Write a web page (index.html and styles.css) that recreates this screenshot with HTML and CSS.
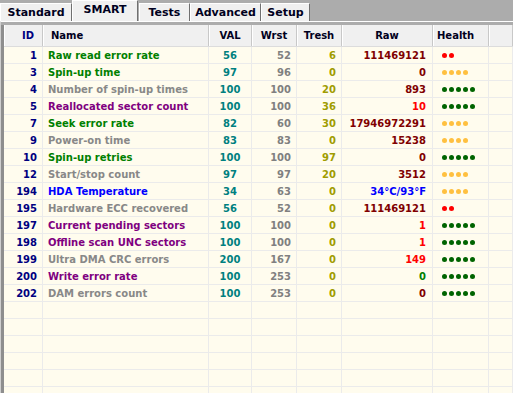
FILE: index.html
```html
<!DOCTYPE html>
<html lang="en">
<head>
    <meta charset="UTF-8">
    <title>SMART</title>
    <link rel="stylesheet" href="styles.css">
</head>
<body>

    <!-- Tab strip -->
    <div class="tabs">
        <div class="tab tab-standard">Standard</div>
        <div class="tab tab-smart active">SMART</div>
        <div class="tab tab-tests">Tests</div>
        <div class="tab tab-advanced">Advanced</div>
        <div class="tab tab-setup">Setup</div>
    </div>

    <div class="panel">
        <div class="grid">
            <div class="row head">
                <div class="cell c-id">ID</div>
                <div class="cell c-name">Name</div>
                <div class="cell c-mid">VAL</div>
                <div class="cell c-mid">Wrst</div>
                <div class="cell c-mid">Tresh</div>
                <div class="cell c-mid">Raw</div>
                <div class="cell c-health">Health</div>
                <div class="cell"></div>
            </div>

            <div class="row">
                <div class="cell c-id">1</div>
                <div class="cell c-name green">Raw read error rate</div>
                <div class="cell c-val">56</div>
                <div class="cell c-wrst">52</div>
                <div class="cell c-tresh">6</div>
                <div class="cell c-raw">111469121</div>
                <div class="cell c-health"><span class="dot red"></span><span class="dot red"></span></div>
                <div class="cell"></div>
            </div>
            <div class="row">
                <div class="cell c-id">3</div>
                <div class="cell c-name green">Spin-up time</div>
                <div class="cell c-val">97</div>
                <div class="cell c-wrst">96</div>
                <div class="cell c-tresh">0</div>
                <div class="cell c-raw">0</div>
                <div class="cell c-health"><span class="dot yellow"></span><span class="dot yellow"></span><span class="dot yellow"></span><span class="dot yellow"></span></div>
                <div class="cell"></div>
            </div>
            <div class="row">
                <div class="cell c-id">4</div>
                <div class="cell c-name gray">Number of spin-up times</div>
                <div class="cell c-val">100</div>
                <div class="cell c-wrst">100</div>
                <div class="cell c-tresh">20</div>
                <div class="cell c-raw">893</div>
                <div class="cell c-health"><span class="dot green"></span><span class="dot green"></span><span class="dot green"></span><span class="dot green"></span><span class="dot green"></span></div>
                <div class="cell"></div>
            </div>
            <div class="row">
                <div class="cell c-id">5</div>
                <div class="cell c-name purple">Reallocated sector count</div>
                <div class="cell c-val">100</div>
                <div class="cell c-wrst">100</div>
                <div class="cell c-tresh">36</div>
                <div class="cell c-raw red-text">10</div>
                <div class="cell c-health"><span class="dot green"></span><span class="dot green"></span><span class="dot green"></span><span class="dot green"></span><span class="dot green"></span></div>
                <div class="cell"></div>
            </div>
            <div class="row">
                <div class="cell c-id">7</div>
                <div class="cell c-name green">Seek error rate</div>
                <div class="cell c-val">82</div>
                <div class="cell c-wrst">60</div>
                <div class="cell c-tresh">30</div>
                <div class="cell c-raw">17946972291</div>
                <div class="cell c-health"><span class="dot yellow"></span><span class="dot yellow"></span><span class="dot yellow"></span><span class="dot yellow"></span></div>
                <div class="cell"></div>
            </div>
            <div class="row">
                <div class="cell c-id">9</div>
                <div class="cell c-name gray">Power-on time</div>
                <div class="cell c-val">83</div>
                <div class="cell c-wrst">83</div>
                <div class="cell c-tresh">0</div>
                <div class="cell c-raw">15238</div>
                <div class="cell c-health"><span class="dot yellow"></span><span class="dot yellow"></span><span class="dot yellow"></span><span class="dot yellow"></span></div>
                <div class="cell"></div>
            </div>
            <div class="row">
                <div class="cell c-id">10</div>
                <div class="cell c-name green">Spin-up retries</div>
                <div class="cell c-val">100</div>
                <div class="cell c-wrst">100</div>
                <div class="cell c-tresh">97</div>
                <div class="cell c-raw">0</div>
                <div class="cell c-health"><span class="dot green"></span><span class="dot green"></span><span class="dot green"></span><span class="dot green"></span><span class="dot green"></span></div>
                <div class="cell"></div>
            </div>
            <div class="row">
                <div class="cell c-id">12</div>
                <div class="cell c-name gray">Start/stop count</div>
                <div class="cell c-val">97</div>
                <div class="cell c-wrst">97</div>
                <div class="cell c-tresh">20</div>
                <div class="cell c-raw">3512</div>
                <div class="cell c-health"><span class="dot yellow"></span><span class="dot yellow"></span><span class="dot yellow"></span><span class="dot yellow"></span></div>
                <div class="cell"></div>
            </div>
            <div class="row">
                <div class="cell c-id">194</div>
                <div class="cell c-name blue">HDA Temperature</div>
                <div class="cell c-val">34</div>
                <div class="cell c-wrst">63</div>
                <div class="cell c-tresh">0</div>
                <div class="cell c-raw blue">34°C/93°F</div>
                <div class="cell c-health"><span class="dot yellow"></span><span class="dot yellow"></span><span class="dot yellow"></span><span class="dot yellow"></span></div>
                <div class="cell"></div>
            </div>
            <div class="row">
                <div class="cell c-id">195</div>
                <div class="cell c-name gray">Hardware ECC recovered</div>
                <div class="cell c-val">56</div>
                <div class="cell c-wrst">52</div>
                <div class="cell c-tresh">0</div>
                <div class="cell c-raw">111469121</div>
                <div class="cell c-health"><span class="dot red"></span><span class="dot red"></span></div>
                <div class="cell"></div>
            </div>
            <div class="row">
                <div class="cell c-id">197</div>
                <div class="cell c-name purple">Current pending sectors</div>
                <div class="cell c-val">100</div>
                <div class="cell c-wrst">100</div>
                <div class="cell c-tresh">0</div>
                <div class="cell c-raw red-text">1</div>
                <div class="cell c-health"><span class="dot green"></span><span class="dot green"></span><span class="dot green"></span><span class="dot green"></span><span class="dot green"></span></div>
                <div class="cell"></div>
            </div>
            <div class="row">
                <div class="cell c-id">198</div>
                <div class="cell c-name purple">Offline scan UNC sectors</div>
                <div class="cell c-val">100</div>
                <div class="cell c-wrst">100</div>
                <div class="cell c-tresh">0</div>
                <div class="cell c-raw red-text">1</div>
                <div class="cell c-health"><span class="dot green"></span><span class="dot green"></span><span class="dot green"></span><span class="dot green"></span><span class="dot green"></span></div>
                <div class="cell"></div>
            </div>
            <div class="row">
                <div class="cell c-id">199</div>
                <div class="cell c-name gray">Ultra DMA CRC errors</div>
                <div class="cell c-val">200</div>
                <div class="cell c-wrst">167</div>
                <div class="cell c-tresh">0</div>
                <div class="cell c-raw red-text">149</div>
                <div class="cell c-health"><span class="dot green"></span><span class="dot green"></span><span class="dot green"></span><span class="dot green"></span><span class="dot green"></span></div>
                <div class="cell"></div>
            </div>
            <div class="row">
                <div class="cell c-id">200</div>
                <div class="cell c-name purple">Write error rate</div>
                <div class="cell c-val">100</div>
                <div class="cell c-wrst">253</div>
                <div class="cell c-tresh">0</div>
                <div class="cell c-raw green">0</div>
                <div class="cell c-health"><span class="dot green"></span><span class="dot green"></span><span class="dot green"></span><span class="dot green"></span><span class="dot green"></span></div>
                <div class="cell"></div>
            </div>
            <div class="row">
                <div class="cell c-id">202</div>
                <div class="cell c-name gray">DAM errors count</div>
                <div class="cell c-val">100</div>
                <div class="cell c-wrst">253</div>
                <div class="cell c-tresh">0</div>
                <div class="cell c-raw">0</div>
                <div class="cell c-health"><span class="dot green"></span><span class="dot green"></span><span class="dot green"></span><span class="dot green"></span><span class="dot green"></span></div>
                <div class="cell"></div>
            </div>

            <!-- empty filler rows -->
            <div class="row"><div class="cell"></div><div class="cell"></div><div class="cell"></div><div class="cell"></div><div class="cell"></div><div class="cell"></div><div class="cell"></div><div class="cell"></div></div>
            <div class="row"><div class="cell"></div><div class="cell"></div><div class="cell"></div><div class="cell"></div><div class="cell"></div><div class="cell"></div><div class="cell"></div><div class="cell"></div></div>
            <div class="row"><div class="cell"></div><div class="cell"></div><div class="cell"></div><div class="cell"></div><div class="cell"></div><div class="cell"></div><div class="cell"></div><div class="cell"></div></div>
            <div class="row"><div class="cell"></div><div class="cell"></div><div class="cell"></div><div class="cell"></div><div class="cell"></div><div class="cell"></div><div class="cell"></div><div class="cell"></div></div>
            <div class="row"><div class="cell"></div><div class="cell"></div><div class="cell"></div><div class="cell"></div><div class="cell"></div><div class="cell"></div><div class="cell"></div><div class="cell"></div></div>
            <div class="row"><div class="cell"></div><div class="cell"></div><div class="cell"></div><div class="cell"></div><div class="cell"></div><div class="cell"></div><div class="cell"></div><div class="cell"></div></div>
        </div>
    </div>

</body>
</html>
```

FILE: styles.css
```css
body {
    margin: 0;
    background-color: #acacac;
    font-family: "DejaVu Sans", Verdana, sans-serif;
    font-weight: bold;
    overflow: hidden;
    height: 393px;
}

/* Tab strip */
.tabs {
    display: flex;
    align-items: flex-end;
    height: 21px;
    color: #000020;
    font-size: 11px;
}

.tab {
    box-sizing: border-box;
    height: 18px;
    line-height: 17px;
    text-align: center;
    background-color: #f0f0f0;
    border-top: 1px solid #ffffff;
    border-left: 1px solid #ffffff;
    border-right: 1px solid #707070;
}

.tab.active {
    height: 21px;
    line-height: 17px;
    align-self: flex-start;
}

.tab-standard { width: 72px; }
.tab-smart    { width: 66px; margin-right: 1px; }
.tab-tests    { width: 51px; }
.tab-advanced { width: 71px; }
.tab-setup    { width: 49px; }

/* Panel under tabs */
.panel {
    border-top: 1px solid #ffffff;
    border-left: 1px solid #cfcfcf;
    padding-top: 3px;
}

.grid {
    border-left: 3px solid #8e8e8e;
    background-color: #fffcee;
}

.row {
    display: grid;
    grid-template-columns: 39px 166px 43px 45px 45px 91px 56px 1fr;
    height: 17px;
    box-sizing: border-box;
    border-bottom: 1px solid #ebebeb;
    font-size: 10px;
    line-height: 18px;
}

.cell {
    border-right: 1px solid #ebebeb;
    white-space: nowrap;
    overflow: hidden;
}

/* Header */
.row.head {
    height: 22px;
    line-height: 22px;
    background-color: #f0f0f0;
    border-bottom: 1px solid #dcdcdc;
    color: #000020;
}

.head .cell {
    border-right: 1px solid #c8c8c8;
    box-shadow: inset 1px 0 #ffffff;
}

.head .c-id { text-align: right; padding-right: 8px; }
.head .c-name { padding-left: 8px; }
.head .c-mid { text-align: center; }
.head .c-health { padding-left: 4px; }

/* Data columns */
.c-id {
    text-align: right;
    padding-right: 5px;
    color: #000080;
}

.c-name { padding-left: 5px; }

.c-val {
    text-align: center;
    color: #008080;
}

.c-wrst {
    text-align: right;
    padding-right: 5px;
    color: #808080;
}

.c-tresh {
    text-align: right;
    padding-right: 5px;
    color: #a09c00;
}

.c-raw {
    text-align: right;
    padding-right: 6px;
    color: #800000;
}

.c-health {
    padding-left: 9px;
    padding-top: 1px;
    display: flex;
    align-items: center;
    gap: 2px;
}

/* Text colours */
.green { color: #008000; }
.gray { color: #888888; }
.purple { color: #800080; }
.blue { color: #0000ff; }
.c-raw.red-text { color: #ff0000; }
.c-raw.green { color: #008000; }
.c-raw.blue { color: #0000ff; }

/* Health dots */
.dot {
    width: 5px;
    height: 5px;
    border-radius: 50%;
}

.dot.red { background-color: #ff0000; }
.dot.yellow { background-color: #ffc040; }
.dot.green { background-color: #006400; }
```
